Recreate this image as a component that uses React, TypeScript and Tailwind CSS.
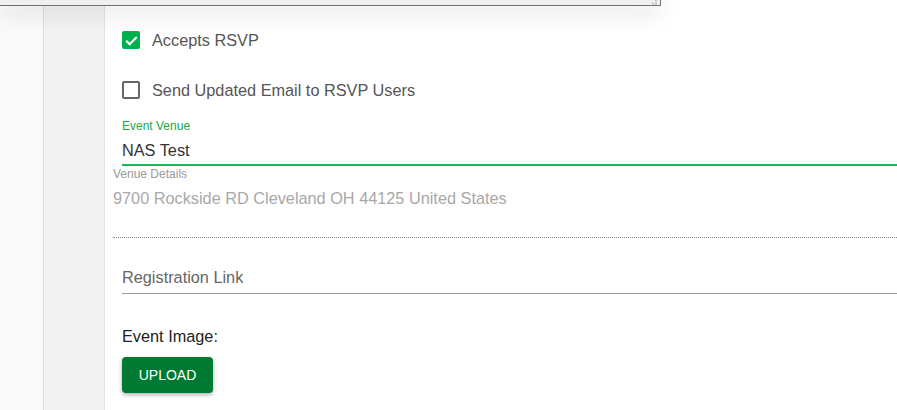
import React from "react";

export default function App() {
  return (
    <div
      className="relative flex h-[410px] w-[897px] overflow-hidden bg-white"
      style={{ fontFamily: '"Liberation Sans", Arial, sans-serif' }}
    >
      {/* popup window edge overlapping the top */}
      <div className="absolute left-0 top-0 z-10 h-[6px] w-[661px] border-b border-r border-[#707070] bg-[#f0f0f0] shadow-[0_6px_22px_rgba(0,0,0,0.22)]">
        <svg className="absolute right-[2px] top-0" width="9" height="5" viewBox="0 0 9 5">
          <rect x="6" y="0" width="2" height="1.5" fill="#c4c4c4" />
          <rect x="3" y="2.5" width="2" height="2" fill="#c4c4c4" />
          <rect x="6" y="2.5" width="2" height="2" fill="#c4c4c4" />
        </svg>
      </div>

      <div className="h-full w-[44px] shrink-0 border-r border-[#dcdcdc] bg-[#fafafa]" />
      <div className="h-full w-[61px] shrink-0 border-r border-[#e2e2e2] bg-[#f3f3f3]" />

      <div className="flex min-w-0 flex-1 flex-col pl-[17px]">
        {/* Accepts RSVP */}
        <div className="mt-[31px] flex h-[18px] items-center">
          <span className="flex h-[18px] w-[18px] items-center justify-center rounded-[2px] bg-[#00b04f]">
            <svg width="15" height="15" viewBox="0 0 24 24">
              <path d="M3.5 12.5l5.5 5.5L20.5 6.5" fill="none" stroke="#fff" strokeWidth="3.6" />
            </svg>
          </span>
          <span className="ml-[12px] text-[16.3px] leading-[19px] text-[#555]">Accepts RSVP</span>
        </div>

        {/* Send Updated Email */}
        <div className="mt-[32px] flex h-[18px] items-center">
          <span className="h-[18px] w-[18px] rounded-[2px] border-2 border-[#666]" />
          <span className="ml-[12px] text-[16.3px] leading-[19px] text-[#555]">
            Send Updated Email to RSVP Users
          </span>
        </div>

        {/* Event Venue */}
        <div className="mt-[20px] flex flex-col">
          <span className="text-[12px] leading-[14px] text-[#22a846]">Event Venue</span>
          <span className="mt-[8px] text-[16.3px] leading-[19px] text-[#333]">NAS Test</span>
          <div className="mt-[4px] h-[2px] bg-[#0fbf55]" />
        </div>

        {/* Venue Details */}
        <div className="ml-[-9px] flex flex-col">
          <span className="mt-[1px] text-[12px] leading-[14px] text-[#9a9a9a]">Venue Details</span>
          <span className="mt-[8px] text-[16.3px] leading-[19px] text-[#a8a8a8]">
            9700 Rockside RD Cleveland OH 44125 United States
          </span>
          <div className="mt-[29px] border-b border-dotted border-[#888]" />
        </div>

        {/* Registration Link */}
        <div className="mt-[30px] flex flex-col">
          <span className="text-[16.3px] leading-[19px] text-[#666]">Registration Link</span>
          <div className="mt-[6px] h-[1px] bg-[#999]" />
        </div>

        {/* Event Image */}
        <span className="mt-[33px] text-[16.3px] leading-[19px] text-[#222]">Event Image:</span>
        <button className="mt-[11px] h-[36px] w-[91px] rounded-[4px] bg-[#007a33] text-[14px] font-medium text-white shadow-[0_2px_4px_rgba(0,0,0,0.3)]">
          UPLOAD
        </button>
      </div>
    </div>
  );
}
